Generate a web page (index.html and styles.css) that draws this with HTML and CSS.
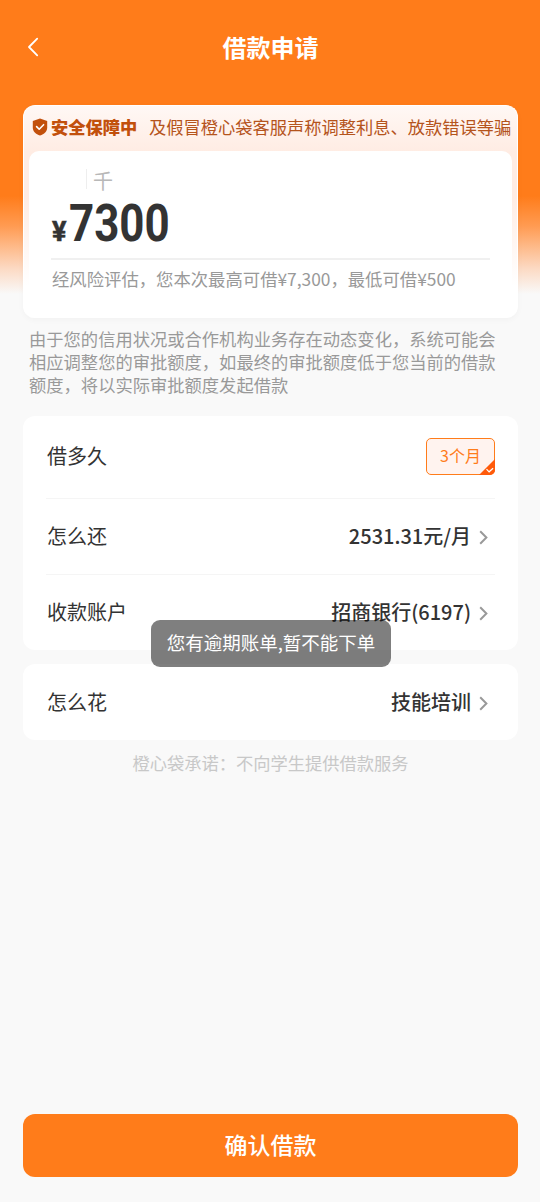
FILE: index.html
```html
<!DOCTYPE html>
<html lang="zh-CN">
<head>
  <meta charset="UTF-8">
  <meta name="viewport" content="width=device-width, initial-scale=1.0">
  <title>借款申请</title>
  <link rel="stylesheet" href="styles.css">
</head>
<body>
  <div class="page">
    <header class="header">
      <svg class="back" viewBox="0 0 12 20" fill="none" stroke="#fff" stroke-width="1.8" stroke-linecap="round" stroke-linejoin="round">
        <path d="M10.2 1.6 2 10l8.2 8.4"/>
      </svg>
      <h1>借款申请</h1>
    </header>

    <section class="amount-card">
      <div class="safety">
        <svg class="shield" viewBox="0 0 16 18">
          <path d="M8 .4 15.2 3v6.4c0 4-3 6.6-7.2 8.2C3.8 16 .8 13.4.8 9.400V3z" fill="#c2500c"/>
          <path d="m4.600 8.600 2.600 2.600 4.400-4.500" fill="none" stroke="#fff" stroke-width="1.600" stroke-linecap="round" stroke-linejoin="round"/>
        </svg>
        <strong>安全保障中</strong>
        <span class="marquee">及假冒橙心袋客服声称调整利息、放款错误等骗</span>
      </div>
      <div class="amount-box">
        <div class="unit"><span>千</span></div>
        <div class="amount">
          <span class="currency">¥</span>
          <span class="number">7300</span>
        </div>
        <p class="range">经风险评估，您本次最高可借¥7,300，最低可借¥500</p>
      </div>
    </section>

    <p class="notice">由于您的信用状况或合作机构业务存在动态变化，系统可能会相应调整您的审批额度，如最终的审批额度低于您当前的借款额度，将以实际审批额度发起借款</p>

    <section class="card">
      <div class="row row-term">
        <span class="label">借多久</span>
        <span class="term">3个月
          <svg class="term-check" viewBox="0 0 16 16">
            <path d="M16 0v11a5 5 0 0 1-5 5H0z" fill="#ff5a0a"/>
            <path d="m7.500 10.200 2.600 2.600 4-3.600" fill="none" stroke="#fff" stroke-width="1.200"/>
          </svg>
        </span>
      </div>
      <div class="row">
        <span class="label">怎么还</span>
        <span class="value">2531.31元/月</span>
        <svg class="arrow" viewBox="0 0 9 15"><path d="m1.200 1.200 6.200 6.300-6.200 6.300"/></svg>
      </div>
      <div class="row">
        <span class="label">收款账户</span>
        <span class="value">招商银行(6197)</span>
        <svg class="arrow" viewBox="0 0 9 15"><path d="m1.200 1.200 6.200 6.300-6.200 6.300"/></svg>
      </div>
    </section>

    <section class="card">
      <div class="row row-use">
        <span class="label">怎么花</span>
        <span class="value">技能培训</span>
        <svg class="arrow" viewBox="0 0 9 15"><path d="m1.200 1.200 6.200 6.300-6.200 6.300"/></svg>
      </div>
    </section>

    <p class="promise">橙心袋承诺：不向学生提供借款服务</p>

    <button class="submit" type="button">确认借款</button>

    <div class="toast">您有逾期账单,暂不能下单</div>
  </div>
</body>
</html>
```

FILE: styles.css
```css
:root {
  --orange: #ff7c1a;
  --bg: #f9f9f9;
  --text: #333;
  --muted: #999;
}

* {
  box-sizing: border-box;
}

body {
  margin: 0;
  font-family: "Noto Sans CJK SC", sans-serif;
  color: var(--text);
  background-color: var(--bg);
}

.page {
  position: relative;
  display: flex;
  flex-direction: column;
  height: 1202px;
  padding: 0 22px 25px 23px;
  background: linear-gradient(to bottom, var(--orange) 196px, #ff9b52 226px, #fcd9c2 268px, var(--bg) 294px);
}

.header {
  display: flex;
  align-items: center;
  height: 94px;
  margin-bottom: 11px;
}

.header h1 {
  flex: 1;
  margin: 0 16px 0 0;
  text-align: center;
  font-size: 24px;
  line-height: 36px;
  font-weight: 700;
  color: #fff;
}

.back {
  width: 12px;
  height: 20px;
  margin-left: 4px;
}

.amount-card {
  height: 213px;
  padding: 0 5px;
  border: 1px solid #fff;
  border-bottom: 0;
  border-radius: 12px;
  background: linear-gradient(to bottom, #fff8f5 0, #ffece3 46px, #ffece3 90px, #fff 180px);
  box-shadow: 0 2px 6px rgba(0, 0, 0, 0.03);
}

.safety {
  display: flex;
  align-items: center;
  height: 45px;
  padding: 0 0 3px 3px;
  font-size: 17.25px;
  line-height: 26px;
  color: #b5541c;
  white-space: nowrap;
}

.shield {
  width: 16px;
  height: 18px;
  margin-right: 3px;
}

.safety strong {
  width: 98px;
  font-weight: 900;
  color: #c2500c;
}

.amount-box {
  height: 167px;
  padding: 18px 22px 0;
  border-radius: 10px 10px 12px 12px;
  background-color: #fff;
}

.unit {
  height: 24px;
  padding-left: 35px;
  font-size: 20px;
  line-height: 24px;
  color: #b8b8b8;
}

.unit span {
  display: block;
  padding-left: 6px;
  height: 20px;
  line-height: 24px;
  border-left: 1px solid #eee;
}

.amount {
  display: flex;
  align-items: baseline;
  height: 67px;
  border-bottom: 2px solid #f0f0f0;
  font-family: Roboto, sans-serif;
  font-weight: 700;
  line-height: 62px;
}

.currency {
  width: 18px;
  padding-left: 1px;
  font-size: 27px;
  -webkit-text-stroke: 0.6px var(--text);
}

/* narrow numerals */
.number {
  font-size: 51px;
  transform: scaleX(0.86);
  transform-origin: left;
}

.range {
  margin: 6px 0 0 1px;
  font-size: 17.35px;
  line-height: 26px;
  color: var(--muted);
  white-space: nowrap;
}

.notice {
  width: 470px;
  margin: 9px 0 20px 6px;
  font-size: 17.3px;
  line-height: 23px;
  color: var(--muted);
}

.card {
  margin-bottom: 14px;
  padding: 0 23px;
  border-radius: 12px;
  background-color: #fff;
}

.row {
  display: flex;
  align-items: center;
  height: 76px;
  padding-bottom: 2px;
  font-size: 20px;
  line-height: 30px;
}

.row + .row {
  border-top: 1px solid #f5f5f5;
}

.row-term {
  height: 82px;
}

.row-use {
  padding-bottom: 0;
}

.label {
  flex: 1;
  padding-left: 1px;
}

.value {
  font-weight: 500;
}

.arrow {
  width: 9px;
  height: 15px;
  margin: 3px 7px 0 8px;
  fill: none;
  stroke: #999;
  stroke-width: 2;
}

.term {
  position: relative;
  width: 69px;
  height: 37px;
  padding-left: 13px;
  border: 1px solid var(--orange);
  border-radius: 5px;
  background-color: #fff3ef;
  font-size: 16px;
  line-height: 33px;
  color: var(--orange);
}

.term-check {
  position: absolute;
  right: -1px;
  bottom: -1px;
  width: 16px;
  height: 16px;
}

.promise {
  margin: -4px 0 0;
  text-align: center;
  font-size: 17.25px;
  line-height: 26px;
  color: #c8c8c8;
}

.submit {
  height: 63px;
  margin-top: auto;
  padding: 0 0 4px;
  border: none;
  border-radius: 12px;
  background-color: var(--orange);
  font-family: inherit;
  font-size: 23px;
  font-weight: 500;
  color: #fff;
}

.toast {
  position: absolute;
  top: 620px;
  left: 151px;
  width: 240px;
  height: 47px;
  border-radius: 9px;
  background-color: rgba(0, 0, 0, 0.5);
  font-size: 18.5px;
  line-height: 44px;
  text-align: center;
  white-space: nowrap;
  color: #fff;
}
```
